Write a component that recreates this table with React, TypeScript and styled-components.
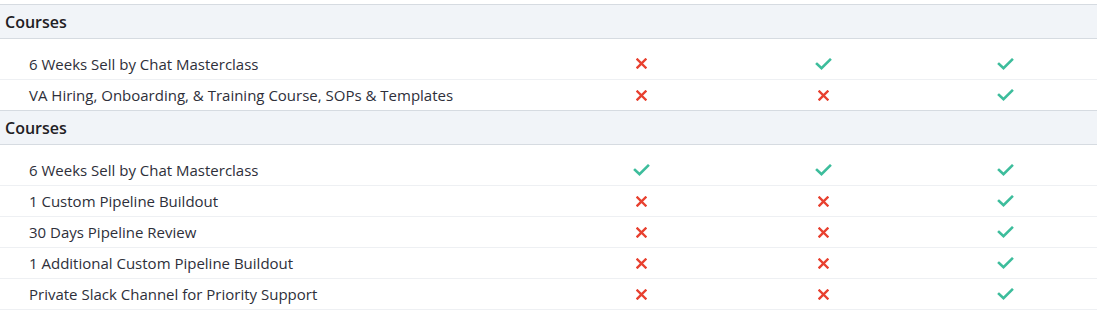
import React from 'react';
import styled, { createGlobalStyle } from 'styled-components';

type Mark = 'yes' | 'no';

interface Section {
  title: string;
  rows: { label: string; marks: Mark[] }[];
}

const sections: Section[] = [
  {
    title: 'Courses',
    rows: [
      { label: '6 Weeks Sell by Chat Masterclass', marks: ['no', 'yes', 'yes'] },
      { label: 'VA Hiring, Onboarding, & Training Course, SOPs & Templates', marks: ['no', 'no', 'yes'] },
    ],
  },
  {
    title: 'Courses',
    rows: [
      { label: '6 Weeks Sell by Chat Masterclass', marks: ['yes', 'yes', 'yes'] },
      { label: '1 Custom Pipeline Buildout', marks: ['no', 'no', 'yes'] },
      { label: '30 Days Pipeline Review', marks: ['no', 'no', 'yes'] },
      { label: '1 Additional Custom Pipeline Buildout', marks: ['no', 'no', 'yes'] },
      { label: 'Private Slack Channel for Priority Support', marks: ['no', 'no', 'yes'] },
    ],
  },
];

const GlobalStyle = createGlobalStyle`
  body {
    margin: 0;
    background: #ffffff;
    font-family: 'Open Sans', 'Liberation Sans', sans-serif;
  }
`;

const CheckIcon = () => (
  <svg width="17" height="12" viewBox="0 0 17 12">
    <path d="M2 6 L6.5 10.2 L15 1.8" fill="none" stroke="#3dbd9c" strokeWidth="2.6" strokeLinecap="square" />
  </svg>
);

const CrossIcon = () => (
  <svg width="11" height="11" viewBox="0 0 11 11">
    <path d="M1.5 1.5 L9.5 9.5 M9.5 1.5 L1.5 9.5" fill="none" stroke="#e8402f" strokeWidth="2.4" strokeLinecap="square" />
  </svg>
);

const App: React.FC = () => {
  return (
    <>
      <GlobalStyle />
      <Page>
        <Table>
          <colgroup>
            <LabelCol />
            <MarkCol />
            <MarkCol />
            <MarkCol />
          </colgroup>
          {sections.map((section, i) => (
            <Section key={i}>
              <HeaderRow>
                <HeaderCell colSpan={4}>{section.title}</HeaderCell>
              </HeaderRow>
              <SpacerRow>
                <td colSpan={4} />
              </SpacerRow>
              {section.rows.map((row) => (
                <Row key={row.label}>
                  <LabelCell>{row.label}</LabelCell>
                  {row.marks.map((m, j) => (
                    <MarkCell key={j}>{m === 'yes' ? <CheckIcon /> : <CrossIcon />}</MarkCell>
                  ))}
                </Row>
              ))}
            </Section>
          ))}
        </Table>
      </Page>
    </>
  );
};
export default App;

const Page = styled.div`
  padding-top: 4px;
  width: 1097px;
`;
const Table = styled.table`
  width: 100%;
  border-collapse: collapse;
  table-layout: fixed;
  color: #2e2f3a;
`;
const LabelCol = styled.col`
  width: 549px;
`;
const MarkCol = styled.col`
  width: 182px;
`;
const Section = styled.tbody`
  &:last-child tr:last-child {
    border-bottom: 1px solid #eef0f3;
  }
`;
const HeaderRow = styled.tr`
  background: #f1f4f8;
  border-top: 1px solid #d6dbe1;
  border-bottom: 1px solid #d6dbe1;
`;
const HeaderCell = styled.td`
  height: 33px;
  padding: 0 5px;
  font-size: 16px;
  font-weight: 600;
  color: #1f2024;
`;
const SpacerRow = styled.tr`
  height: 10px;
  td {
    padding: 0;
  }
`;
const Row = styled.tr`
  height: 31px;
  border-bottom: 1px solid #eef0f3;
  &:last-child {
    border-bottom: none;
  }
`;
const LabelCell = styled.td`
  padding: 0 0 0 29px;
  font-size: 15px;
  white-space: nowrap;
`;
const MarkCell = styled.td`
  text-align: center;
  padding: 0;
  svg {
    display: block;
    margin: 0 auto;
  }
`;
